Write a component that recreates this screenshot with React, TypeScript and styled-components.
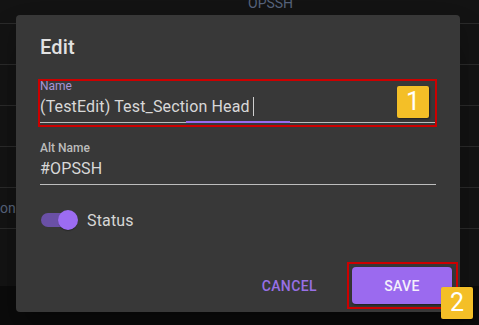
import React from "react";
import styled, { createGlobalStyle } from "styled-components";

const Global = createGlobalStyle`
  html, body { margin: 0; padding: 0; background: #0b0b0b; }
  body { font-family: Roboto, "Liberation Sans", sans-serif; }
  * { box-sizing: border-box; }
`;

const Page = styled.div`
  position: relative;
  width: 479px;
  height: 325px;
  overflow: hidden;
  background: #0b0b0b;
`;

const TablePanel = styled.div`
  height: 303px;
  margin-top: -17px;
  background: #131313;
  display: flex;
  flex-direction: column;
`;

const Row = styled.div`
  height: 41px;
  flex: none;
  border-bottom: 1px solid #2a2a2a;
  display: flex;
  align-items: center;
  position: relative;
`;

const Cell = styled.div<{ $align?: string; $width: number }>`
  width: ${(p) => p.$width}px;
  flex: none;
  text-align: ${(p) => p.$align || "left"};
  font-size: 14px;
  color: #56627a;
  white-space: nowrap;
  overflow: hidden;
`;

const Blue = styled.span`
  color: #3f5390;
`;

const Dialog = styled.div`
  position: absolute;
  left: 16px;
  top: 15px;
  width: 444px;
  height: 297px;
  background: #383838;
  border-radius: 4px;
  box-shadow: 0 11px 15px -7px rgba(0,0,0,0.2), 0 24px 38px 3px rgba(0,0,0,0.14);
  display: flex;
  flex-direction: column;
`;

const Title = styled.h2`
  margin: 0;
  padding: 16px 24px;
  font-size: 20px;
  line-height: 32px;
  font-weight: 500;
  letter-spacing: 0.15px;
  color: #e2e2e2;
`;

const Content = styled.div`
  padding: 0 24px 20px;
  display: flex;
  flex-direction: column;
`;

const Field = styled.div<{ $focused?: boolean }>`
  position: relative;
  display: flex;
  flex-direction: column;
  padding-bottom: 4px;
  border-bottom: 1px solid #bdbdbd;
  margin-bottom: ${(p) => (p.$focused ? 18 : 16)}px;
`;

const Label = styled.label<{ $focused?: boolean }>`
  font-size: 12px;
  line-height: 14px;
  font-weight: ${(p) => (p.$focused ? 400 : 500)};
  color: ${(p) => (p.$focused ? "#a995d6" : "#bcbcbc")};
`;

const Value = styled.div`
  margin-top: 2px;
  height: 23px;
  font-size: 16px;
  line-height: 23px;
  letter-spacing: 0.15px;
  color: #d8d8d8;
  display: flex;
  align-items: center;
  white-space: pre;
`;

const Caret = styled.span`
  display: inline-block;
  width: 1px;
  height: 19px;
  margin-left: 3px;
  background: #cfcfcf;
`;

const FocusBar = styled.div`
  position: absolute;
  bottom: -1px;
  height: 2px;
  background: #9a6bf0;
`;

const SwitchRow = styled.div`
  display: flex;
  align-items: center;
  margin-left: -11px;
  height: 38px;
`;

const SwitchRoot = styled.div`
  position: relative;
  width: 58px;
  height: 38px;
  padding: 12px;
  flex: none;
`;

const Track = styled.div`
  width: 34px;
  height: 14px;
  border-radius: 7px;
  background: #6a50a6;
`;

const Thumb = styled.div`
  position: absolute;
  left: 29px;
  top: 9px;
  width: 20px;
  height: 20px;
  border-radius: 50%;
  background: #9c6cf2;
  box-shadow: 0 2px 1px -1px rgba(0,0,0,0.2), 0 1px 1px 0 rgba(0,0,0,0.14);
`;

const SwitchLabel = styled.span`
  font-size: 16px;
  letter-spacing: 0.15px;
  color: #d6d6d6;
`;

const Actions = styled.div`
  margin-top: auto;
  padding: 8px;
  display: flex;
  justify-content: flex-end;
  align-items: center;
  gap: 27px;
`;

const Button = styled.button<{ $contained?: boolean }>`
  font-family: Roboto, "Liberation Sans", sans-serif;
  font-size: 14px;
  font-weight: 500;
  letter-spacing: 0.4px;
  text-transform: uppercase;
  border: none;
  border-radius: 4px;
  cursor: pointer;
  height: 37px;
  padding: ${(p) => (p.$contained ? "0 16px" : "0 8px")};
  width: ${(p) => (p.$contained ? "100px" : "auto")};
  background: ${(p) => (p.$contained ? "#9b6aef" : "transparent")};
  color: ${(p) => (p.$contained ? "#f4f0fb" : "#9870e6")};
  box-shadow: ${(p) =>
    p.$contained ? "0 3px 1px -2px rgba(0,0,0,0.2), 0 2px 2px 0 rgba(0,0,0,0.14), 0 1px 5px 0 rgba(0,0,0,0.12)" : "none"};
`;

const Highlight = styled.div<{ $x: number; $y: number; $w: number; $h: number }>`
  position: absolute;
  left: ${(p) => p.$x}px;
  top: ${(p) => p.$y}px;
  width: ${(p) => p.$w}px;
  height: ${(p) => p.$h}px;
  border: 2px solid #cc0000;
  pointer-events: none;
`;

const Badge = styled.div<{ $x: number; $y: number }>`
  position: absolute;
  left: ${(p) => p.$x}px;
  top: ${(p) => p.$y}px;
  width: 32px;
  height: 32px;
  border-radius: 2px;
  background: #f4bf27;
  color: #ffffff;
  font-family: Roboto, "Liberation Sans", sans-serif;
  font-size: 25px;
  line-height: 32px;
  text-align: center;
  box-shadow: 1px 1px 2px rgba(0,0,0,0.45);
`;

export default function App() {
  return (
    <Page>
      <Global />
      <TablePanel>
        <Row>
          <Cell $width={248} />
          <Cell $width={80} $align="left">OPSSH</Cell>
        </Row>
        <Row />
        <Row />
        <Row />
        <Row />
        <Row>
          <Cell $width={16} $align="right">
            on <Blue>I</Blue>
          </Cell>
        </Row>
      </TablePanel>

      <Dialog>
        <Title>Edit</Title>
        <Content>
          <Field $focused>
            <Label $focused>Name</Label>
            <Value>
              (TestEdit) Test_Section Head<Caret />
            </Value>
            <FocusBar style={{ left: 146, width: 104 }} />
          </Field>
          <Field>
            <Label>Alt Name</Label>
            <Value>#OPSSH</Value>
          </Field>
          <SwitchRow>
            <SwitchRoot>
              <Track />
              <Thumb />
            </SwitchRoot>
            <SwitchLabel>Status</SwitchLabel>
          </SwitchRow>
        </Content>
        <Actions>
          <Button>Cancel</Button>
          <Button $contained>Save</Button>
        </Actions>
      </Dialog>

      <Highlight $x={38} $y={79} $w={399} $h={48} />
      <Badge $x={397} $y={86}>1</Badge>
      <Highlight $x={347} $y={262} $w={111} $h={47} />
      <Badge $x={441} $y={287}>2</Badge>
    </Page>
  );
}
